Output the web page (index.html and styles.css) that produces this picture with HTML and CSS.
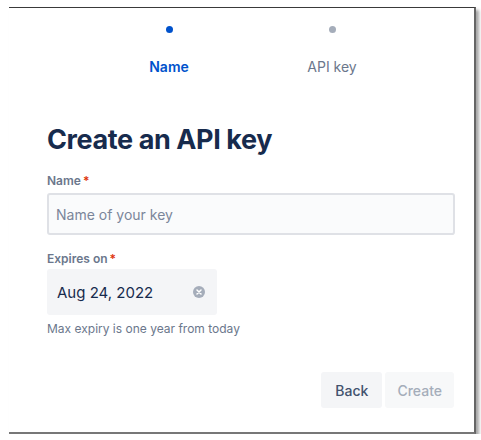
FILE: index.html
```html
<!DOCTYPE html>
<html>
<head>
    <title>Create an API key</title>
    <link rel="stylesheet" href="styles.css">
</head>
<body>

<div class="frame">
    <!-- Progress steps -->
    <div class="steps">
        <div class="step active">
            <span class="dot"></span>
            <span class="step-label">Name</span>
        </div>
        <div class="step">
            <span class="dot"></span>
            <span class="step-label">API key</span>
        </div>
    </div>

    <h1 class="title">Create an API key</h1>

    <label class="field-label">Name<span class="req">*</span></label>
    <input class="text-input" type="text" placeholder="Name of your key">

    <label class="field-label expires">Expires on<span class="req">*</span></label>
    <div class="date-field">
        <span class="date-value">Aug 24, 2022</span>
        <svg class="clear-icon" width="12" height="12" viewBox="0 0 12 12">
            <circle cx="6" cy="6" r="6" fill="#a5adba"/>
            <path d="M4 4 L8 8 M8 4 L4 8" stroke="#fff" stroke-width="1.5" stroke-linecap="round"/>
        </svg>
    </div>
    <div class="helper">Max expiry is one year from today</div>

    <div class="actions">
        <button class="btn back">Back</button>
        <button class="btn create" disabled>Create</button>
    </div>
</div>

</body>
</html>
```

FILE: styles.css
```css
body {
    margin: 0;
    background: #fff;
    font-family: "Inter", "Liberation Sans", sans-serif;
}

/* Dialog frame with its screenshot shadow */
.frame {
    margin: 7px 0 0 9px;
    width: 467px;
    height: 427px;
    box-sizing: border-box;
    border-top: 1px solid #3a3a3a;
    border-right: 2px solid #666;
    border-bottom: 2px solid #777;
    box-shadow: 3px 3px 3px rgba(0, 0, 0, 0.35);
    background: #fff;
    padding: 0 0 0 38px;
}

/* Steps */
.steps {
    display: flex;
    padding-top: 18px;
    margin-left: 82px;
    gap: 83px;
}

.step {
    display: flex;
    flex-direction: column;
    align-items: center;
    width: 80px;
}

.dot {
    width: 7px;
    height: 7px;
    border-radius: 50%;
    background: #a5adba;
}

.step.active .dot {
    background: #0052cc;
}

.step-label {
    margin-top: 25px;
    font-size: 14px;
    color: #6b778c;
}

.step.active .step-label {
    color: #0052cc;
    font-weight: 600;
}

/* Title */
.title {
    margin: 49px 0 0;
    font-size: 27px;
    font-weight: 700;
    color: #172b4d;
    letter-spacing: -0.4px;
    line-height: 32px;
}

/* Form fields */
.field-label {
    display: block;
    margin-top: 17px;
    font-size: 12px;
    font-weight: 600;
    color: #6b778c;
}

.field-label.expires {
    margin-top: 16px;
}

.req {
    color: #de350b;
    margin-left: 2px;
}

.text-input {
    display: block;
    margin-top: 5px;
    width: 408px;
    height: 42px;
    box-sizing: border-box;
    border: 2px solid #dfe1e6;
    border-radius: 3px;
    background: #fafbfc;
    padding: 0 7px;
    font-family: inherit;
    font-size: 14px;
    color: #172b4d;
}

.text-input::placeholder {
    color: #7a869a;
}

.date-field {
    display: flex;
    align-items: center;
    justify-content: space-between;
    margin-top: 3px;
    width: 170px;
    height: 46px;
    box-sizing: border-box;
    padding: 0 12px 0 10px;
    background: #f4f5f7;
    border-radius: 3px;
}

.date-value {
    font-size: 15px;
    color: #172b4d;
}

.helper {
    margin-top: 6px;
    font-size: 12px;
    color: #6b778c;
}

/* Footer buttons */
.actions {
    display: flex;
    justify-content: flex-end;
    gap: 3px;
    margin: 36px 20px 0 0;
}

.btn {
    height: 36px;
    padding: 0 14px;
    border: none;
    border-radius: 3px;
    font-family: inherit;
    font-size: 14px;
    font-weight: 500;
    background: #f4f5f7;
    color: #42526e;
}

.btn.create {
    padding: 0 12px;
    background: #f7f8f9;
    color: #a5adba;
}
```
